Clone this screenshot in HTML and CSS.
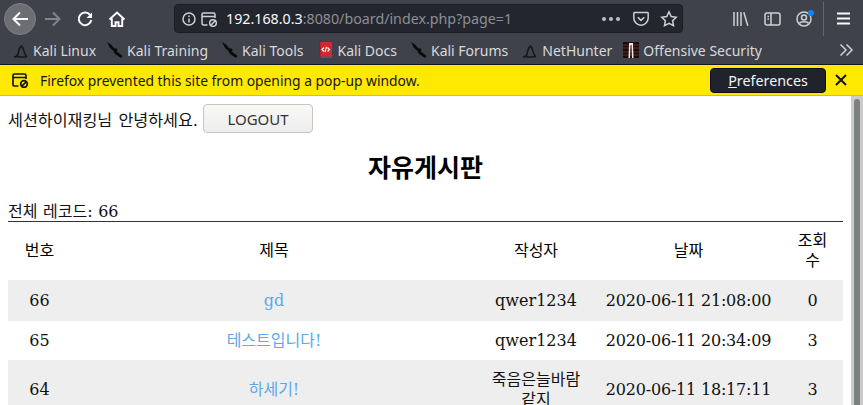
FILE: index.html
```html
<!DOCTYPE html>
<html lang="ko">
<head>
<meta charset="utf-8">
<title>자유게시판</title>
<link rel="stylesheet" href="styles.css">
</head>
<body>
<div class="window">
  <header class="nav-bar">
    <div class="nav-left">
      <span class="back-btn"><svg width="18" height="18" viewBox="0 0 18 18" class="ic"><path d="M17 9H2.500M9 2.500L2.500 9 9 15.500"/></svg></span>
      <svg width="18" height="18" viewBox="0 0 18 18" class="ic dim"><path d="M1 9h14.500M9 2.500L15.500 9 9 15.500"/></svg>
      <svg width="18" height="18" viewBox="0 0 18 18" class="ic"><path d="M14.200 5.200A6.300 6.300 0 1 0 15.300 10"/><path d="M16 2.500v5.500h-5.500z" class="solid"/></svg>
      <svg width="18" height="18" viewBox="0 0 18 18" class="ic"><path d="M1.500 9.500L9 2.500l7.500 7M3.800 8.500V16h3.700v-3.800h3V16h3.700V8.500"/></svg>
    </div>
    <div class="url-bar">
      <svg width="16" height="16" viewBox="0 0 16 16" class="ic thin"><circle cx="8" cy="8" r="6"/><path d="M8 7.500V11.500M8 4.500v1.500"/></svg>
      <svg width="18" height="16" viewBox="0 0 18 16" class="ic thin"><path d="M7.500 14H3.500A1.500 1.500 0 0 1 2 12.500v-9A1.500 1.500 0 0 1 3.500 2h10A1.500 1.500 0 0 1 15 3.500V7M2 5.500h13"/><circle cx="13" cy="12" r="3.300"/><path d="M10.800 14.200l4.400-4.400"/></svg>
      <span class="url"><span class="host">192.168.0.3</span>:8080/board/index.php?page=1</span>
      <span class="url-actions">
        <span class="dots"><i></i><i></i><i></i></span>
        <svg width="18" height="18" viewBox="0 0 18 18" class="ic thin"><path d="M2.500 2.500h13a.700.700 0 0 1 .700.700V8a7.200 7.200 0 0 1-14.400 0V3.200a.700.700 0 0 1 .700-.700zM5.800 7.200L9 10.400l3.200-3.200"/></svg>
        <svg width="18" height="18" viewBox="0 0 18 18" class="ic thin"><path d="M9 1.800l2.200 4.700 5 .700-3.600 3.500.9 5L9 13.300l-4.500 2.400.9-5L1.800 7.200l5-.700z"/></svg>
      </span>
    </div>
    <div class="nav-right">
      <svg width="16" height="14" viewBox="0 0 16 14" class="ic thin lib"><path d="M1 0v14M4.500 0v14M8 0v14M10.800 .3l4 13.400"/></svg>
      <svg width="17" height="14" viewBox="0 0 17 14" class="ic thin"><rect x="1" y="1" width="15" height="12" rx="2"/><path d="M7 1v12M3.500 4.500h1.500M3.500 7h1.500"/></svg>
      <span class="profile">
        <svg width="16" height="16" viewBox="0 0 16 16" class="ic thin"><circle cx="8" cy="8" r="7"/><circle cx="8" cy="6.500" r="2.500"/><path d="M3.500 12.500c1-2.500 8-2.500 9 0"/></svg>
        <i class="dot"></i>
      </span>
      <span class="sep"></span>
      <svg width="13" height="13" viewBox="0 0 13 13" class="ic"><path d="M0 1.500h13M0 6.500h13M0 11.500h13"/></svg>
    </div>
  </header>

  <nav class="bookmarks">
    <span class="bm"><svg width="16" height="16" viewBox="0 0 16 16" class="dragon-thin"><path d="M1 15c2.500-.3 3.500-1 4-3 .5-3 1.200-6.500 3.500-8 2 1 2 4.500 3 7 .6 1.500 1.200 3 2.500 4M4 15h9"/></svg>Kali Linux</span>
    <span class="bm"><svg width="16" height="16" viewBox="0 0 16 16" class="dragon"><path d="M0 0l4 2.500L7 6l3.500 1-.5 2.500 5.500 4.500-1.500 2L8 12 6.500 9 3 6z"/></svg>Kali Training</span>
    <span class="bm"><svg width="16" height="16" viewBox="0 0 16 16" class="dragon"><path d="M0 0l4 2.500L7 6l3.500 1-.5 2.500 5.500 4.500-1.500 2L8 12 6.500 9 3 6z"/></svg>Kali Tools</span>
    <span class="bm docs"><svg width="13" height="16" viewBox="0 0 13 16"><rect width="13" height="16" rx="1" fill="#d7272e"/><rect width="13" height="1.500" y="14.500" fill="#3b5d8f"/><rect width="1.500" height="16" fill="#8f1a20"/><path d="M5 5.500L3 7.500l2 2M8.500 5.500l2 2-2 2M7.500 4.800L6 10.200" fill="none" stroke="#fff" stroke-width="1.200"/></svg>Kali Docs</span>
    <span class="bm"><svg width="16" height="16" viewBox="0 0 16 16" class="dragon"><path d="M0 0l4 2.500L7 6l3.500 1-.5 2.500 5.500 4.500-1.500 2L8 12 6.500 9 3 6z"/></svg>Kali Forums</span>
    <span class="bm"><svg width="16" height="16" viewBox="0 0 16 16" class="dragon-thin"><path d="M1 15c2.500-.3 3.500-1 4-3 .5-3 1.200-6.500 3.500-8 2 1 2 4.500 3 7 .6 1.500 1.200 3 2.500 4M4 15h9"/></svg>NetHunter</span>
    <span class="bm"><svg width="16" height="16" viewBox="0 0 16 16"><rect width="16" height="16" fill="#1f0a0a"/><path d="M0 3h16M0 6h16M0 10h16M0 13h16" stroke="#5a3030" stroke-width="1"/><path d="M6 1h4v1.500l.5 13.500H9L8.500 3h-1L7 16H5.500L6 2.500z" fill="#eee8e8"/></svg>Offensive Security</span>
    <svg width="16" height="16" viewBox="0 0 16 16" class="ic thin more"><path d="M2.500 2.500L8 8l-5.500 5.500M8.500 2.500L14 8l-5.500 5.500"/></svg>
  </nav>

  <div class="notice">
    <svg width="18" height="16" viewBox="0 0 18 16" class="notice-ic"><path d="M7.500 14H3.500A1.500 1.500 0 0 1 2 12.500v-9A1.500 1.500 0 0 1 3.500 2h10A1.500 1.500 0 0 1 15 3.500V7M2 5.500h13"/><circle cx="13" cy="12" r="3.300"/><path d="M10.800 14.200l4.400-4.400"/></svg>
    <span class="notice-text">Firefox prevented this site from opening a pop-up window.</span>
    <button class="pref-btn"><u>P</u>references</button>
    <svg width="12" height="12" viewBox="0 0 12 12" class="close"><path d="M1 1l10 10M11 1L1 11"/></svg>
  </div>

  <div class="viewport">
    <main class="page">
      <p class="welcome"><span class="greet">세션하이재킹님 안녕하세요.</span><button class="logout">LOGOUT</button></p>
      <h1 class="title">자유게시판</h1>
      <div class="total">전체 레코드: 66</div>
      <table class="board">
        <colgroup>
          <col class="c-no"><col class="c-title"><col class="c-author"><col class="c-date"><col class="c-views">
        </colgroup>
        <thead>
          <tr><th>번호</th><th>제목</th><th>작성자</th><th>날짜</th><th>조회수</th></tr>
        </thead>
        <tbody>
          <tr><td>66</td><td><a href="#">gd</a></td><td>qwer1234</td><td>2020-06-11 21:08:00</td><td>0</td></tr>
          <tr><td>65</td><td><a href="#">테스트입니다!</a></td><td>qwer1234</td><td>2020-06-11 20:34:09</td><td>3</td></tr>
          <tr><td>64</td><td><a href="#">하세기!</a></td><td>죽음은늘바람같지</td><td>2020-06-11 18:17:11</td><td>3</td></tr>
        </tbody>
      </table>
    </main>
    <div class="scrollbar"><span class="thumb"></span></div>
  </div>
</div>
</body>
</html>
```
FILE: styles.css
```css
* { box-sizing: border-box; }
html, body { margin: 0; height: 100%; overflow: hidden; background: #fff; }
.window { display: flex; flex-direction: column; height: 405px; }

.ic { fill: none; stroke: #f9f9fa; stroke-width: 2; flex: none; }
.ic.dim { stroke: #83858a; }
.ic.thin { stroke: #cfd0d3; stroke-width: 1.500; }
.ic .solid { fill: #f9f9fa; stroke: none; }

.nav-bar { height: 37px; background: #40424b; display: flex; align-items: center; padding-left: 4px; font-family: "Open Sans", sans-serif; flex: none; }
.nav-left { display: flex; align-items: center; gap: 14px; width: 170px; flex: none; }
.back-btn { width: 32px; height: 32px; border-radius: 50%; background: #6d6e74; border: 1px solid #7f8085; display: flex; align-items: center; justify-content: center; margin-right: -6px; }
.url-bar { width: 509px; height: 29px; background: #24262f; border: 1px solid #1b1c23; border-radius: 4px; display: flex; align-items: center; gap: 3px; padding-left: 6px; flex: none; }
.url { font-family: "Noto Sans", sans-serif; font-size: 14.25px; color: #8d8f95; margin-left: 5px; white-space: nowrap; }
.host { color: #f9f9fa; }
.url-actions { margin-left: auto; display: flex; align-items: center; gap: 10px; padding-right: 4px; }
.dots { display: flex; gap: 3px; margin-right: 2px; }
.dots i { width: 4px; height: 4px; border-radius: 50%; background: #bfc0c3; }
.nav-right { display: flex; align-items: center; gap: 15px; margin-left: auto; padding-right: 13px; }
.profile { position: relative; display: flex; }
.dot { position: absolute; top: -1px; right: -2px; width: 6px; height: 6px; border-radius: 50%; background: #0a84ff; }
.sep { width: 1px; height: 34px; background: #65666c; margin-left: -4px; margin-right: -2px; }

.bookmarks { height: 28px; padding-bottom: 1px; background: #40424b; border-bottom: 1px solid #15161b; display: flex; align-items: center; padding-left: 13px; gap: 14px; color: #d8d9dc; font-family: "Noto Sans", sans-serif; font-size: 14px; flex: none; white-space: nowrap; }
.bm { display: flex; align-items: center; gap: 4px; }
.bm:nth-child(2) { margin-left: -3px; }
.bm:nth-child(4) { margin-left: 2px; gap: 5px; }
.bm:nth-child(7) { margin-left: -3px; }
.dragon { fill: #0b0b0d; flex: none; }
.dragon-thin { fill: none; stroke: #15161a; stroke-width: 1.500; flex: none; }
.more { margin-left: auto; margin-right: 9px; }

.notice { height: 31px; background: #ffe900; border-bottom: 1px solid #d7c400; display: flex; align-items: center; padding-left: 11px; font-family: "Noto Sans", sans-serif; font-size: 13.85px; color: #15141a; flex: none; }
.notice-ic { fill: none; stroke: #15141a; stroke-width: 1.700; flex: none; margin-right: 11px; }
.pref-btn { margin-left: auto; width: 116px; height: 25px; background: #20232c; color: #f4f4f6; border: 1px solid #0c0c10; border-radius: 4px; font: inherit; font-size: 14.3px; padding: 0; }
.close { fill: none; stroke: #15141a; stroke-width: 2; margin: 0 16px 0 9px; flex: none; }

.viewport { flex: 1; min-height: 0; display: flex; overflow: hidden; }
.page { flex: 1; min-width: 0; padding: 0 8px; font-family: "DejaVu Serif", "Noto Sans CJK KR", serif; font-size: 16px; color: #111; }
.welcome { margin: 8px 0 0; height: 29px; display: flex; align-items: center; gap: 5px; }
.greet { font-size: 16.2px; word-spacing: 1px; }
.logout { width: 110px; height: 29px; background: linear-gradient(#f8f8f7, #eeedeb); border: 1px solid #c9c6c0; border-radius: 4px; color: #333; font-family: "Noto Sans", sans-serif; font-size: 15px; padding: 0; }
.title { margin: 20px 0 0; text-align: center; font-size: 25px; line-height: 32px; font-weight: 700; color: #000; }
.total { margin-top: 17px; line-height: 19px; border-bottom: 1px solid #333; height: 20px; word-spacing: .5px; }
.board { width: 100%; border-collapse: collapse; table-layout: fixed; text-align: center; }
.c-no { width: 63px; } .c-title { width: 406px; } .c-author { width: 118px; } .c-date { width: 187px; } .c-views { width: 61px; }
.board th { font-weight: 400; height: 58px; font-size: 16px; line-height: 20px; padding: 0 14px; color: #000; }
.board td { font-size: 16px; line-height: 20px; padding: 9px 14px; color: #111; }
.board th:nth-child(4), .board td:nth-child(4) { padding-left: 0; padding-right: 0; }
.board td:nth-child(4) { letter-spacing: -.2px; white-space: nowrap; }
.board tbody tr:nth-child(1) td { height: 41px; }
.board tbody tr:nth-child(2) td { height: 39px; }
.board tbody tr:nth-child(3) td { padding-top: 10px; padding-bottom: 8px; }
.board tbody tr:nth-child(odd) { background: #eee; }
.board a { color: #5ca8ea; text-decoration: none; }

.scrollbar { width: 12px; flex: none; background: #cbcbcb; position: relative; }
.thumb { position: absolute; top: 3px; left: 3px; width: 6px; bottom: 0; background: #7d8080; border-radius: 3px 3px 0 0; }
```
